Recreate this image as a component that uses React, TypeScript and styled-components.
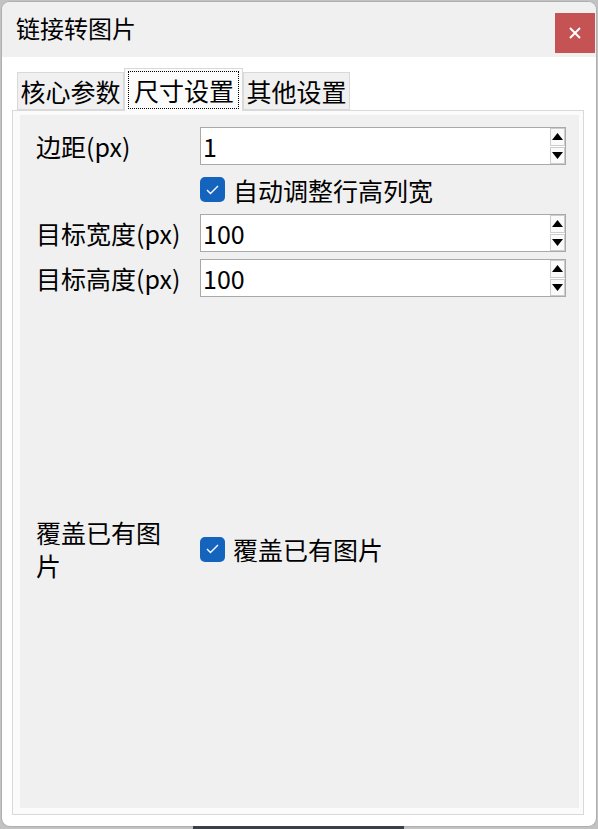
import React from "react";
import styled, { createGlobalStyle } from "styled-components";

const GlobalStyle = createGlobalStyle`
  html, body {
    margin: 0;
    padding: 0;
    background: #c2c2c2;
    overflow: hidden;
  }
  body {
    font-family: "Noto Sans CJK SC", "Noto Sans", sans-serif;
    color: #000;
  }
`;

const Page = styled.div`
  width: 598px;
  height: 829px;
  padding: 2px 2px 0 2px;
  box-sizing: border-box;
  display: flex;
  flex-direction: column;
`;

const Window = styled.div`
  width: 594px;
  height: 824px;
  background: #ffffff;
  border-radius: 8px;
  overflow: hidden;
  display: flex;
  flex-direction: column;
  box-shadow: 0 0 0 1px #b0b0b0;
`;

const TitleBar = styled.div`
  height: 55px;
  flex: none;
  background: #f0f0f0;
  display: flex;
  align-items: flex-start;
  justify-content: space-between;
  padding-left: 14px;
  padding-right: 1px;
`;

const Title = styled.div`
  font-size: 24px;
  line-height: 52px;
  white-space: nowrap;
`;

const CloseButton = styled.div`
  margin-top: 11px;
  width: 40px;
  height: 40px;
  background: #c65353;
  display: flex;
  align-items: center;
  justify-content: center;
`;

const Body = styled.div`
  flex: 1;
  display: flex;
  flex-direction: column;
  padding: 11px 12px 11px 10px;
`;

const TabBar = styled.div`
  display: flex;
  align-items: flex-end;
  margin-left: 5px;
  margin-bottom: -1px;
  position: relative;
  z-index: 1;
`;

const Tab = styled.div<{ $active?: boolean; $w: number }>`
  width: ${(p) => p.$w}px;
  height: ${(p) => (p.$active ? 43 : 38)}px;
  margin-bottom: ${(p) => (p.$active ? 0 : 1)}px;
  box-sizing: border-box;
  border: 1px solid #d9d9d9;
  border-bottom: ${(p) => (p.$active ? "none" : "1px solid #d9d9d9")};
  background: ${(p) => (p.$active ? "#fbfbfb" : "#f0f0f0")};
  display: flex;
  align-items: ${(p) => (p.$active ? "flex-start" : "center")};
  justify-content: center;
  font-size: 25px;
  line-height: 32px;
  white-space: nowrap;
  padding-top: ${(p) => (p.$active ? 3 : 0)}px;
`;

const FocusText = styled.span`
  outline: 1px dotted #000;
  outline-offset: 0;
  padding: 2px 4px 2px 5px;
`;

const Pane = styled.div`
  flex: 1;
  border: 1px solid #d9d9d9;
  background: #fbfbfb;
  padding: 4px 4px 6px 7px;
  display: flex;
`;

const PaneInner = styled.div`
  flex: 1;
  background: #f0f0f0;
  padding: 12px 13px 0 16px;
  display: flex;
  flex-direction: column;
`;

const Form = styled.div<{ $top?: number }>`
  display: grid;
  grid-template-columns: 146px 1fr;
  column-gap: 18px;
  row-gap: 7px;
  align-items: center;
  margin-top: ${(p) => p.$top ?? 0}px;
`;

const Label = styled.div<{ $wrap?: boolean }>`
  font-size: 25px;
  line-height: ${(p) => (p.$wrap ? 33 : 32)}px;
  white-space: ${(p) => (p.$wrap ? "normal" : "nowrap")};
  word-break: break-all;
`;

const SpinBox = styled.div`
  height: 38px;
  box-sizing: border-box;
  border: 1px solid #a9a9a9;
  background: #ffffff;
  display: flex;
  align-items: center;
`;

const SpinValue = styled.div`
  flex: 1;
  font-size: 25px;
  line-height: 36px;
  padding-left: 2px;
`;

const SpinButtons = styled.div`
  width: 15px;
  height: 36px;
  display: flex;
  flex-direction: column;
  gap: 1px;
`;

const SpinButton = styled.div`
  flex: 1;
  box-sizing: border-box;
  border: 1px solid #cdcdcd;
  background: #fafafa;
  display: flex;
  align-items: center;
  justify-content: center;
`;

const CheckRow = styled.div<{ $h?: number }>`
  display: flex;
  align-items: center;
  gap: 8px;
  height: ${(p) => p.$h ?? 35}px;
  font-size: 25px;
  white-space: nowrap;
`;

const CheckBox = styled.div`
  width: 25px;
  height: 25px;
  border-radius: 5px;
  background: #1464be;
  display: flex;
  align-items: center;
  justify-content: center;
  flex: none;
`;

const BackdropStrip = styled.div`
  margin-left: 191px;
  margin-top: 0;
  width: 211px;
  height: 3px;
  background: #3b4046;
`;

const Spin: React.FC<{ value: string }> = ({ value }) => (
  <SpinBox>
    <SpinValue>{value}</SpinValue>
    <SpinButtons>
      <SpinButton>
        <svg width="11" height="7" viewBox="0 0 11 7">
          <polygon points="0,7 11,7 5.5,0" fill="#000" />
        </svg>
      </SpinButton>
      <SpinButton>
        <svg width="11" height="7" viewBox="0 0 11 7">
          <polygon points="0,0 11,0 5.5,7" fill="#000" />
        </svg>
      </SpinButton>
    </SpinButtons>
  </SpinBox>
);

const Check: React.FC<{ label: string; h?: number }> = ({ label, h }) => (
  <CheckRow $h={h}>
    <CheckBox>
      <svg width="13" height="10" viewBox="0 0 13 10">
        <polyline points="1,5 4.5,8.5 12,1" fill="none" stroke="#fff" strokeWidth="1.4" />
      </svg>
    </CheckBox>
    {label}
  </CheckRow>
);

const tabs = [
  { label: "核心参数", w: 107 },
  { label: "尺寸设置", w: 119, active: true },
  { label: "其他设置", w: 107 },
];

export default function App() {
  return (
    <>
      <GlobalStyle />
      <Page>
        <Window>
          <TitleBar>
            <Title>链接转图片</Title>
            <CloseButton>
              <svg width="12" height="12" viewBox="0 0 12 12">
                <path d="M1 1 L11 11 M11 1 L1 11" stroke="#fff" strokeWidth="2" />
              </svg>
            </CloseButton>
          </TitleBar>
          <Body>
            <TabBar>
              {tabs.map((t) => (
                <Tab key={t.label} $active={t.active} $w={t.w}>
                  {t.active ? <FocusText>{t.label}</FocusText> : t.label}
                </Tab>
              ))}
            </TabBar>
            <Pane>
              <PaneInner>
                <Form>
                  <Label>边距(px)</Label>
                  <Spin value="1" />
                  <span />
                  <Check label="自动调整行高列宽" />
                  <Label>目标宽度(px)</Label>
                  <Spin value="100" />
                  <Label>目标高度(px)</Label>
                  <Spin value="100" />
                </Form>
                <Form $top={219}>
                  <Label $wrap>覆盖已有图片</Label>
                  <Check label="覆盖已有图片" h={66} />
                </Form>
              </PaneInner>
            </Pane>
          </Body>
        </Window>
        <BackdropStrip />
      </Page>
    </>
  );
}
